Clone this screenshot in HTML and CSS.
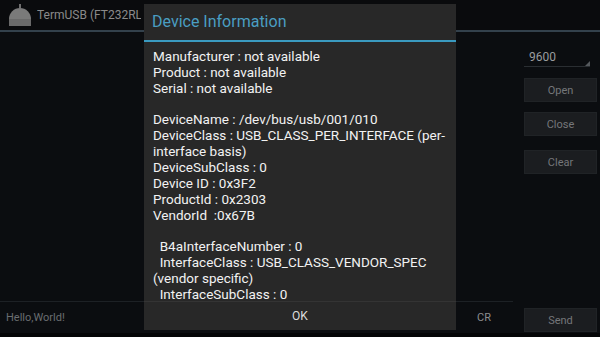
FILE: index.html
```html
<!DOCTYPE html>
<html lang="en">

<head>
  <meta charset="UTF-8" />
  <meta name="viewport" content="width=device-width, initial-scale=1.0" />
  <title>TermUSB</title>
  <link rel="stylesheet" href="styles.css">
</head>

<body>
  <div class="app">
    <header class="actionbar">
      <svg class="logo" width="26" height="24" viewBox="0 0 26 24">
        <rect x="12" y="1" width="2" height="4" fill="#6e6e6e" />
        <path d="M2 16 A11 11 0 0 1 24 16 Z" fill="#7a7a7a" />
        <rect x="2" y="16" width="22" height="7" fill="#6a6a6a" />
      </svg>
      <span class="apptitle">TermUSB (FT232RL,CP2102,PL2303)</span>
    </header>

    <main class="content">
      <section class="console">
        <div class="output"></div>
        <div class="inputrow">
          <span class="edit">Hello,World!</span>
          <span class="cr">CR</span>
        </div>
      </section>

      <aside class="controls">
        <div class="spinner">9600</div>
        <button class="btn btn-open">Open</button>
        <button class="btn btn-close">Close</button>
        <button class="btn btn-clear">Clear</button>
        <div class="spacer"></div>
        <button class="btn btn-send">Send</button>
      </aside>
    </main>
  </div>

  <div class="dialog">
    <h2 class="dialog-title">Device Information</h2>
    <div class="dialog-body">
      <p>Manufacturer : not available<br>Product : not available<br>Serial : not available</p>
      <p>DeviceName : /dev/bus/usb/001/010<br>DeviceClass : USB_CLASS_PER_INTERFACE (per-interface basis)<br>DeviceSubClass : 0<br>Device ID : 0x3F2<br>ProductId : 0x2303<br>VendorId &nbsp;:0x67B</p>
      <p>&nbsp; B4aInterfaceNumber : 0<br>&nbsp; InterfaceClass : USB_CLASS_VENDOR_SPEC (vendor specific)<br>&nbsp; InterfaceSubClass : 0</p>
    </div>
    <div class="dialog-buttons">OK</div>
  </div>
</body>

</html>
```

FILE: styles.css
```css
body {
  margin: 0;
  width: 600px;
  height: 337px;
  overflow: hidden;
  background: #0b0d10;
  font-family: Roboto, "Liberation Sans", sans-serif;
  position: relative;
}

.app {
  display: flex;
  flex-direction: column;
  height: 333px;
  border-bottom: 4px solid #040506;
}

.actionbar {
  height: 30px;
  display: flex;
  align-items: center;
  padding-left: 7px;
  gap: 4px;
  border-bottom: 2px solid #33414c;
  background: #0a0b0d;
}

.logo {
  flex: none;
}

.apptitle {
  width: 104px;
  overflow: hidden;
  color: #8a8a8a;
  font-size: 12px;
  white-space: nowrap;
}

.content {
  flex: 1;
  display: flex;
}

.console {
  flex: 1;
  display: flex;
  flex-direction: column;
}

.output {
  flex: 1;
  margin-right: 11px;
  border-bottom: 1px solid #1d2125;
}

.inputrow {
  height: 31px;
  display: flex;
  align-items: center;
  padding-left: 6px;
  color: #6a6d70;
  font-size: 11px;
}

.edit {
  flex: 1;
}

.cr {
  width: 47px;
  color: #8a8c8e;
  font-size: 11px;
}

.controls {
  width: 73px;
  padding-right: 3px;
  display: flex;
  flex-direction: column;
}

.spinner {
  margin-top: 16px;
  height: 18px;
  padding-left: 5px;
  color: #9a9c9e;
  font-size: 12px;
  line-height: 18px;
  border-bottom: 1px solid #2a2e32;
  margin-right: 7px;
  position: relative;
}

.spinner::after {
  content: "";
  position: absolute;
  right: 0;
  bottom: 0;
  border-left: 5px solid transparent;
  border-bottom: 5px solid #55595d;
}

.btn {
  height: 24px;
  border: 1px solid #202326;
  background: #1b1d20;
  color: #75777a;
  font-family: Roboto, "Liberation Sans", sans-serif;
  font-size: 11px;
  padding: 0;
}

.btn-open {
  margin-top: 11px;
}

.btn-close {
  margin-top: 10px;
}

.btn-clear {
  margin-top: 14px;
}

.spacer {
  flex: 1;
}

.btn-send {
  margin-bottom: 1px;
}

/* dialog over the dimmed app */
.dialog {
  position: absolute;
  left: 144px;
  top: 4px;
  width: 312px;
  height: 326px;
  background: #282828;
  display: flex;
  flex-direction: column;
}

.dialog-title {
  margin: 0;
  height: 36px;
  line-height: 36px;
  padding-left: 8px;
  font-size: 16px;
  font-weight: normal;
  color: #4a9ec2;
  border-bottom: 2px solid #3a9ac0;
}

.dialog-body {
  flex: 1 1 0;
  min-height: 0;
  padding: 6px 9px 0;
  color: #f2f2f2;
  font-size: 13.5px;
  line-height: 16px;
}

.dialog-body p {
  margin: 0 0 15px;
}

.dialog-body p:last-child {
  margin-bottom: 0;
}

.dialog-buttons {
  height: 28px;
  border-top: 1px solid #343434;
  text-align: center;
  line-height: 28px;
  font-size: 12px;
  color: #dcdcdc;
}
```
